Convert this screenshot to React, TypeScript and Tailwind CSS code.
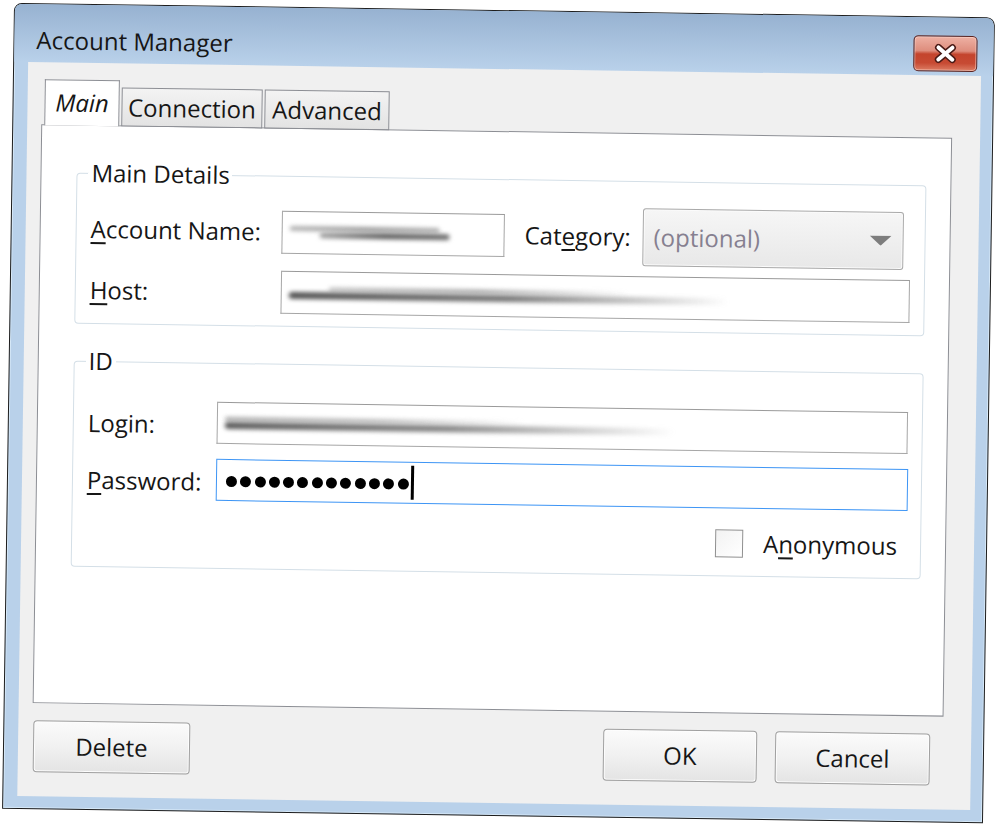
import type { ReactNode } from 'react'

function Acc({ children }: { children: ReactNode }) {
  return <span className="underline decoration-[1.5px] underline-offset-[4px]">{children}</span>
}

function CloseButton() {
  return (
    <div className="flex h-[36px] w-[64px] items-center justify-center rounded-[5px] border border-[#5b2320] bg-[linear-gradient(#eeb1a4_0%,#de8d7d_42%,#c4442d_52%,#c74a33_78%,#dc7c63_100%)] shadow-[inset_0_0_0_1px_rgba(255,220,210,0.55)]">
      <svg width="28" height="20" viewBox="0 0 28 20">
        <path d="M7 4 L21 16 M21 4 L7 16" stroke="#4a1a16" strokeWidth="7" strokeLinecap="round" />
        <path d="M7 4 L21 16 M21 4 L7 16" stroke="#ffffff" strokeWidth="4" strokeLinecap="round" />
      </svg>
    </div>
  )
}

function Smudge({ className }: { className: string }) {
  return <div className={`rounded-full blur-[2px] ${className}`} />
}

function TextBox({ className, children }: { className: string; children?: ReactNode }) {
  return (
    <div className={`flex items-center border border-[#a6a6a6] border-t-[#9a9a9a] bg-white pl-[7px] ${className}`}>
      {children}
    </div>
  )
}

function Button({ label, className }: { label: string; className: string }) {
  return (
    <div
      className={`flex h-[52px] items-center justify-center rounded-[4px] border border-[#a0a0a0] bg-linear-to-b from-[#fbfbfb] via-[#f1f1f1] to-[#e4e4e4] shadow-[inset_0_0_0_1px_#fdfdfd] ${className}`}
    >
      {label}
    </div>
  )
}

export default function App() {
  const dots = Array.from({ length: 13 })
  return (
    <div className="h-[830px] w-[1000px] overflow-hidden bg-white pl-[8px] pt-[10px] font-['Open_Sans','Noto_Sans',sans-serif] text-[24px] text-[#161616]">
      <div className="flex h-[806px] w-[981px] rotate-[0.85deg] flex-col rounded-t-[8px] border border-[#1d1d1d] bg-[#b9d1ea] shadow-[inset_0_0_0_1px_#d6e8f7]">
        {/* title bar */}
        <div className="flex h-[58px] shrink-0 items-center rounded-t-[7px] bg-linear-to-b from-[#97b2d1] to-[#b9d1ea] pl-[22px] pr-[16px] pt-[13px]">
          <span className="flex-1 leading-none">Account Manager</span>
          <CloseButton />
        </div>

        {/* client area */}
        <div className="mb-[12px] ml-[14px] mr-[12px] flex flex-1 flex-col bg-[#f0f0f0] pt-[17px]">
          {/* tabs */}
          <div className="relative z-10 -mb-px flex h-[46px] items-end pl-[17px]">
            <div className="flex h-[46px] w-[75px] items-center justify-center border border-b-0 border-[#8c8e94] bg-white pb-[2px] italic">
              Main
            </div>
            <div className="ml-[2px] flex h-[39px] w-[141px] items-center justify-center border border-[#8c8e94] bg-linear-to-b from-[#f3f3f3] to-[#e3e3e3]">
              Connection
            </div>
            <div className="ml-[2px] flex h-[39px] w-[125px] items-center justify-center border border-[#8c8e94] bg-linear-to-b from-[#f3f3f3] to-[#e3e3e3]">
              Advanced
            </div>
          </div>

          {/* tab panel */}
          <div className="ml-[14px] mr-[28px] h-[579px] border border-[#8c8e94] bg-white pl-[35px]">
            <fieldset className="mt-[33px] w-[850px] rounded-[4px] border border-[#d4dfe7] pb-[12px] pl-[14px]">
              <legend className="-ml-[3px] px-[3px] leading-[28px]">Main Details</legend>
              <div className="flex h-[58px] items-center pt-0 mt-[13px]">
                <span className="w-[191px] shrink-0">
                  <Acc>A</Acc>ccount Name:
                </span>
                <TextBox className="h-[43px] w-[223px]">
                  <div className="flex flex-col gap-[1px]">
                    <Smudge className="h-[5px] w-[150px] bg-linear-to-r from-[#b4b4b4] via-[#9c9c9c] to-[#b0b0b0]" />
                    <Smudge className="ml-[30px] h-[6px] w-[130px] bg-linear-to-r from-[#a5a5a5] via-[#5f5f5f] to-[#707070]" />
                  </div>
                </TextBox>
                <span className="ml-[20px] w-[118px] shrink-0">
                  Cat<Acc>e</Acc>gory:
                </span>
                <div className="flex h-[58px] w-[261px] items-center justify-between rounded-[3px] border border-[#a9a9a9] bg-linear-to-b from-[#f6f6f6] to-[#e8e8e8] pl-[10px] pr-[11px] shadow-[inset_0_0_0_1px_#fbfbfb]">
                  <span className="text-[#868090]">(optional)</span>
                  <svg width="22" height="10" viewBox="0 0 22 10">
                    <polygon points="0,0 22,0 11,10" fill="#7d7d7d" />
                  </svg>
                </div>
              </div>
              <div className="mt-[10px] flex h-[43px] items-center">
                <span className="w-[191px] shrink-0">
                  <Acc>H</Acc>ost:
                </span>
                <TextBox className="h-[43px] w-[629px]">
                  <div className="flex flex-col gap-[1px]">
                    <Smudge className="ml-[40px] h-[4px] w-[300px] bg-linear-to-r from-[#c0c0c0] via-[#a4a4a4] to-transparent" />
                    <Smudge className="h-[7px] w-[440px] bg-linear-to-r from-[#555555] via-[#7a7a7a] to-transparent" />
                  </div>
                </TextBox>
              </div>
            </fieldset>

            <fieldset className="mt-[23px] w-[850px] rounded-[4px] border border-[#d4dfe7] pb-[18px] pl-[14px]">
              <legend className="-ml-[3px] px-[3px] leading-[28px]">ID</legend>
              <div className="mt-[25px] flex h-[42px] items-center">
                <span className="w-[129px] shrink-0 pt-[4px]">Login:</span>
                <TextBox className="h-[42px] w-[691px]">
                  <div className="flex flex-col gap-[1px]">
                    <Smudge className="h-[4px] w-[300px] bg-linear-to-r from-[#a8a8a8] via-[#b8b8b8] to-transparent" />
                    <Smudge className="h-[7px] w-[450px] bg-linear-to-r from-[#5c5c5c] via-[#8a8a8a] to-transparent" />
                  </div>
                </TextBox>
              </div>
              <div className="mt-[15px] flex h-[42px] items-center">
                <span className="w-[129px] shrink-0 pt-[4px]">
                  <Acc>P</Acc>assword:
                </span>
                <div className="flex h-[42px] w-[692px] items-center border border-[#3d95f5] bg-white pl-[9px]">
                  <div className="flex gap-[3.3px] pt-[2px]">
                    {dots.map((_, i) => (
                      <div key={i} className="h-[11px] w-[11px] rounded-full bg-black" />
                    ))}
                  </div>
                  <div className="ml-[2px] h-[34px] w-[3px] bg-black" />
                </div>
              </div>
              <div className="ml-[629px] mt-[21px] flex h-[28px] items-center gap-[20px]">
                <div className="h-[28px] w-[28px] border border-[#8f8f8f] bg-linear-to-br from-[#f2f2f2] to-white" />
                <span>
                  A<Acc>n</Acc>onymous
                </span>
              </div>
            </fieldset>
          </div>

          {/* buttons */}
          <div className="mt-[17px] flex pl-[15px] pr-[41px]">
            <Button label="Delete" className="w-[157px]" />
            <Button label="OK" className="ml-auto w-[154px]" />
            <Button label="Cancel" className="ml-[18px] w-[155px]" />
          </div>
        </div>
      </div>
    </div>
  )
}
